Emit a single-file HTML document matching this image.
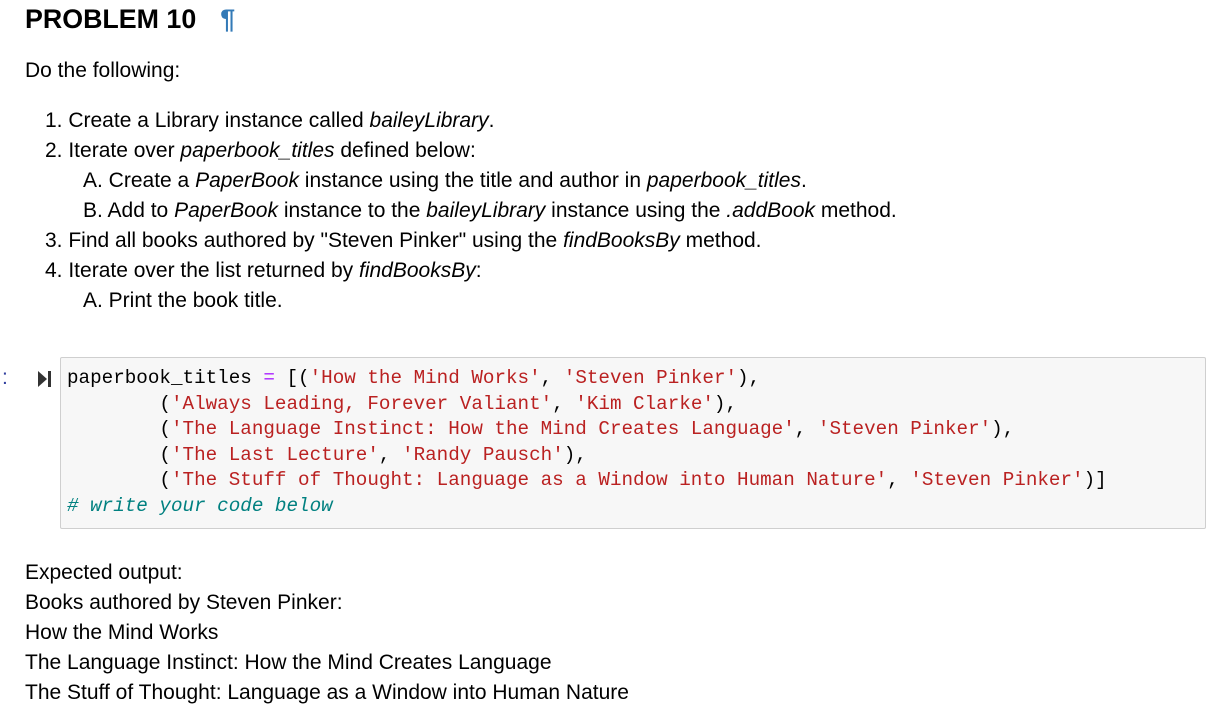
<!DOCTYPE html>
<html><head><style>
body{margin:0;background:#fff;width:1206px;height:723px;overflow:hidden;font-family:"Liberation Sans",Arial,sans-serif;color:#000;position:relative}
.a{position:absolute;white-space:pre;font-size:21px;line-height:24px}
h1{position:absolute;left:25px;top:2px;margin:0;font-size:26.8px;font-weight:bold;line-height:34px}
h1 span{color:#337ab7;margin-left:24px}
.code{position:absolute;left:60px;top:357px;width:1146px;height:172px;background:#f7f7f7;border:1px solid #cfcfcf;box-sizing:border-box;border-radius:2px}
pre{position:absolute;left:67px;top:366px;margin:0;font-family:"Liberation Mono",monospace;font-size:19.25px;line-height:25.5px;color:#000}
.s{color:#ba2121}.o{color:#aa22ff}.c{color:#008080;font-style:italic}
</style></head><body>
<h1>PROBLEM 10<span>¶</span></h1>
<div class="a" style="left:25px;top:59px">Do the following:</div>
<div class="a" style="left:45px;top:109px">1. Create a Library instance called <i>baileyLibrary</i>.</div>
<div class="a" style="left:45px;top:139px">2. Iterate over <i>paperbook_titles</i> defined below:</div>
<div class="a" style="left:83px;top:169px">A. Create a <i>PaperBook</i> instance using the title and author in <i>paperbook_titles</i>.</div>
<div class="a" style="left:83px;top:199px">B. Add to <i>PaperBook</i> instance to the <i>baileyLibrary</i> instance using the <i>.addBook</i> method.</div>
<div class="a" style="left:45px;top:229px">3. Find all books authored by "Steven Pinker" using the <i>findBooksBy</i> method.</div>
<div class="a" style="left:45px;top:259px">4. Iterate over the list returned by <i>findBooksBy</i>:</div>
<div class="a" style="left:83px;top:289px">A. Print the book title.</div>
<div class="a" style="left:2px;top:366px;color:#303f9f">:</div>
<svg style="position:absolute;left:38px;top:371px" width="14" height="16"><path d="M0 0L9 8L0 16Z" fill="#333"/><rect x="10" y="0" width="3" height="16" fill="#333"/></svg>
<div class="code"></div>
<pre>paperbook_titles <span class="o">=</span> [(<span class="s">'How the Mind Works'</span>, <span class="s">'Steven Pinker'</span>),
        (<span class="s">'Always Leading, Forever Valiant'</span>, <span class="s">'Kim Clarke'</span>),
        (<span class="s">'The Language Instinct: How the Mind Creates Language'</span>, <span class="s">'Steven Pinker'</span>),
        (<span class="s">'The Last Lecture'</span>, <span class="s">'Randy Pausch'</span>),
        (<span class="s">'The Stuff of Thought: Language as a Window into Human Nature'</span>, <span class="s">'Steven Pinker'</span>)]
<span class="c"># write your code below</span></pre>
<div class="a" style="left:25px;top:561px">Expected output:</div>
<div class="a" style="left:25px;top:591px">Books authored by Steven Pinker:</div>
<div class="a" style="left:25px;top:621px">How the Mind Works</div>
<div class="a" style="left:25px;top:651px">The Language Instinct: How the Mind Creates Language</div>
<div class="a" style="left:25px;top:681px">The Stuff of Thought: Language as a Window into Human Nature</div>
</body></html>
